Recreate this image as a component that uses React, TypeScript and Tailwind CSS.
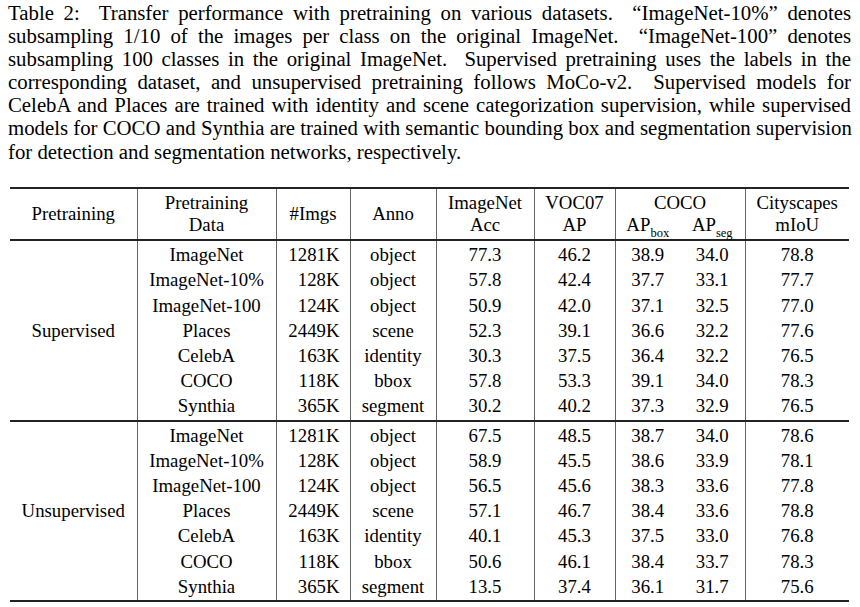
const serif = { fontFamily: '"Liberation Serif", "Times New Roman", serif' };

type Row = [string, string, string, string, string, string, string, string];

const supervised: Row[] = [
  ["ImageNet", "1281K", "object", "77.3", "46.2", "38.9", "34.0", "78.8"],
  ["ImageNet-10%", "128K", "object", "57.8", "42.4", "37.7", "33.1", "77.7"],
  ["ImageNet-100", "124K", "object", "50.9", "42.0", "37.1", "32.5", "77.0"],
  ["Places", "2449K", "scene", "52.3", "39.1", "36.6", "32.2", "77.6"],
  ["CelebA", "163K", "identity", "30.3", "37.5", "36.4", "32.2", "76.5"],
  ["COCO", "118K", "bbox", "57.8", "53.3", "39.1", "34.0", "78.3"],
  ["Synthia", "365K", "segment", "30.2", "40.2", "37.3", "32.9", "76.5"],
];

const unsupervised: Row[] = [
  ["ImageNet", "1281K", "object", "67.5", "48.5", "38.7", "34.0", "78.6"],
  ["ImageNet-10%", "128K", "object", "58.9", "45.5", "38.6", "33.9", "78.1"],
  ["ImageNet-100", "124K", "object", "56.5", "45.6", "38.3", "33.6", "77.8"],
  ["Places", "2449K", "scene", "57.1", "46.7", "38.4", "33.6", "78.8"],
  ["CelebA", "163K", "identity", "40.1", "45.3", "37.5", "33.0", "76.8"],
  ["COCO", "118K", "bbox", "50.6", "46.1", "38.4", "33.7", "78.3"],
  ["Synthia", "365K", "segment", "13.5", "37.4", "36.1", "31.7", "75.6"],
];

// caption lines, broken where the paper breaks them
const caption = [
  "Table 2:\u00a0 Transfer performance with pretraining on various datasets.\u00a0 “ImageNet-10%” denotes",
  "subsampling 1/10 of the images per class on the original ImageNet.\u00a0 “ImageNet-100” denotes",
  "subsampling 100 classes in the original ImageNet.\u00a0 Supervised pretraining uses the labels in the",
  "corresponding dataset, and unsupervised pretraining follows MoCo-v2.\u00a0 Supervised models for",
  "CelebA and Places are trained with identity and scene categorization supervision, while supervised",
  "models for COCO and Synthia are trained with semantic bounding box and segmentation supervision",
  "for detection and segmentation networks, respectively.",
];

const vl = "border-l border-l-[#666]";

function Group({ label, rows }: { label: string; rows: Row[] }) {
  return (
    <>
      {rows.map((r, i) => {
        const pad =
          i === 0 ? "pt-[1px]" : i === rows.length - 1 ? "pb-[1px]" : "";
        return (
          <tr
            key={r[0]}
            className={i === 0 ? "border-t-2 border-t-[#222]" : ""}
          >
            {i === 0 && (
              <td rowSpan={rows.length} className="text-center align-middle">
                {label}
              </td>
            )}
            <td className={`${vl} ${pad} text-center`}>{r[0]}</td>
            <td className={`${vl} ${pad} text-right pr-[10px]`}>{r[1]}</td>
            <td className={`${vl} ${pad} text-center`}>{r[2]}</td>
            <td className={`${vl} ${pad} text-center`}>{r[3]}</td>
            <td className={`${vl} ${pad} text-center`}>{r[4]}</td>
            <td className={`${vl} ${pad} text-center`}>{r[5]}</td>
            <td className={`${pad} text-center`}>{r[6]}</td>
            <td className={`${vl} ${pad} text-center`}>{r[7]}</td>
          </tr>
        );
      })}
    </>
  );
}

export default function App() {
  return (
    <div className="w-[860px] h-[607px] bg-white text-black overflow-hidden" style={serif}>
      <div className="ml-[8px] w-[843px] pt-[1px] text-[20.8px] leading-[23.1px]">
        {caption.map((line, i) => (
          <div
            key={i}
            className={`whitespace-nowrap ${
              i < caption.length - 1 ? "text-justify [text-align-last:justify]" : "text-left"
            }`}
          >
            {line}
          </div>
        ))}
      </div>

      <table className="mt-[24px] ml-[10px] w-[839px] table-fixed border-collapse text-[18.8px] leading-[25.2px]">
        <colgroup>
          <col className="w-[127px]" />
          <col className="w-[139px]" />
          <col className="w-[74px]" />
          <col className="w-[86px]" />
          <col className="w-[98px]" />
          <col className="w-[81px]" />
          <col className="w-[65px]" />
          <col className="w-[65px]" />
          <col className="w-[104px]" />
        </colgroup>
        <thead className="leading-[22px]">
          <tr className="border-t-2 border-t-[#222]">
            <td rowSpan={2} className="text-center align-middle">Pretraining</td>
            <td rowSpan={2} className={`${vl} text-center align-middle`}>
              Pretraining
              <br />
              Data
            </td>
            <td rowSpan={2} className={`${vl} text-center align-middle`}>#Imgs</td>
            <td rowSpan={2} className={`${vl} text-center align-middle`}>Anno</td>
            <td className={`${vl} text-center pt-[3px]`}>ImageNet</td>
            <td className={`${vl} text-center pt-[3px]`}>VOC07</td>
            <td colSpan={2} className={`${vl} text-center pt-[3px]`}>COCO</td>
            <td className={`${vl} text-center pt-[3px]`}>Cityscapes</td>
          </tr>
          <tr>
            <td className={`${vl} text-center pb-[3px]`}>Acc</td>
            <td className={`${vl} text-center pb-[3px]`}>AP</td>
            <td className={`${vl} text-center pb-[3px]`}>
              AP<sub className="text-[12.5px] leading-none align-[-3px]">box</sub>
            </td>
            <td className="text-center pb-[3px]">
              AP<sub className="text-[12.5px] leading-none align-[-3px]">seg</sub>
            </td>
            <td className={`${vl} text-center pb-[3px]`}>mIoU</td>
          </tr>
        </thead>
        <tbody className="border-b-2 border-b-[#222]">
          <Group label="Supervised" rows={supervised} />
          <Group label="Unsupervised" rows={unsupervised} />
        </tbody>
      </table>
    </div>
  );
}
